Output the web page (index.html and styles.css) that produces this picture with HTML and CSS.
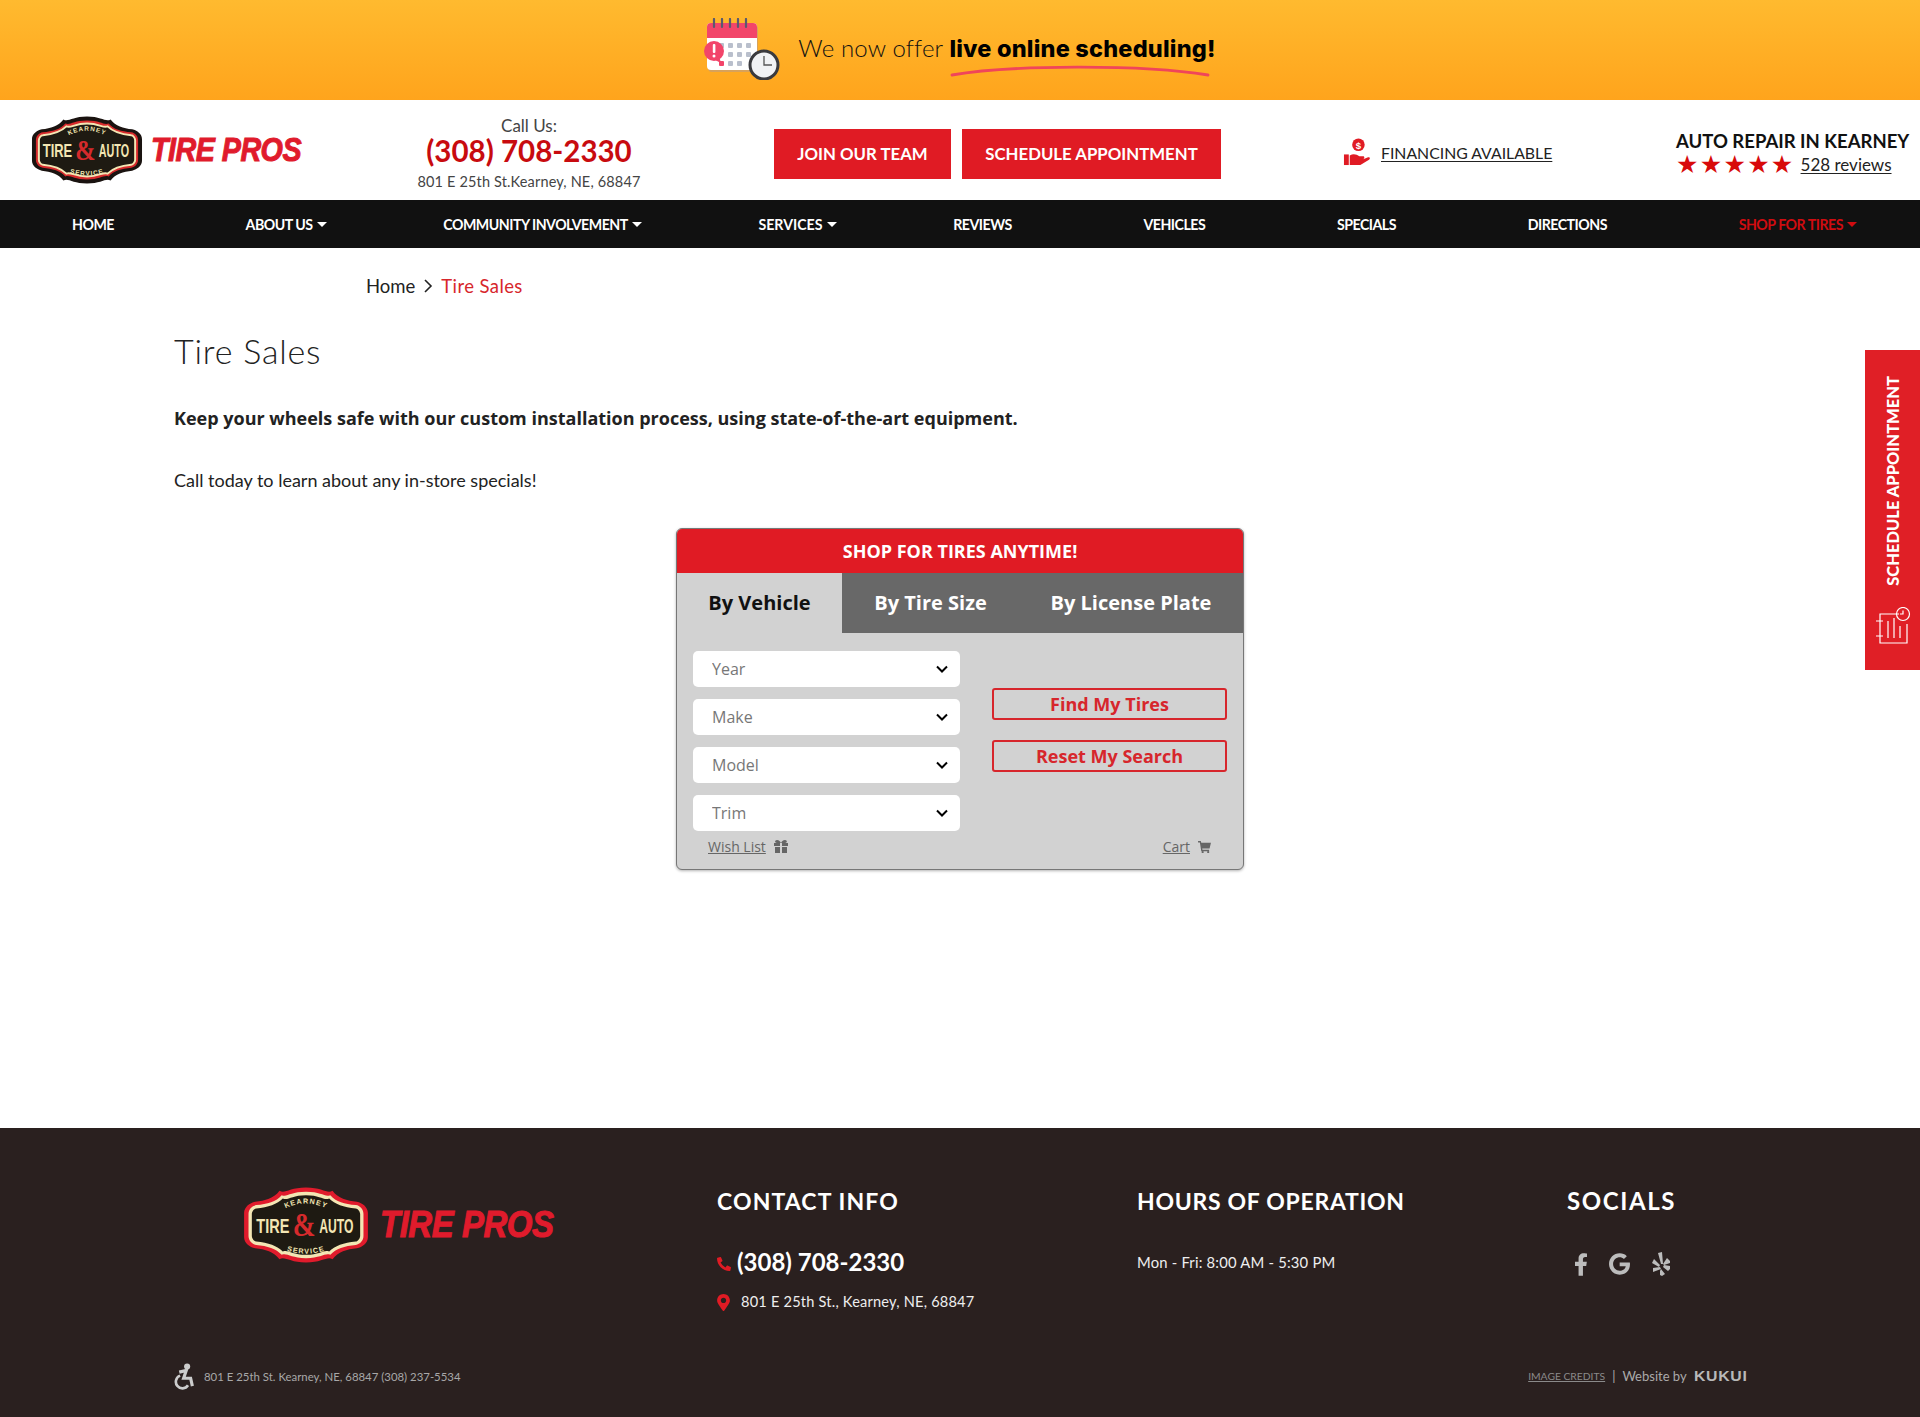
FILE: index.html
```html
<!DOCTYPE html>
<html lang="en">
<head>
<meta charset="utf-8">
<title>Tire Sales</title>
<link rel="stylesheet" href="styles.css">
</head>
<body>
<div class="banner">
  <svg class="cal" viewBox="0 0 76 62" width="76" height="62">
    <rect x="4" y="7" width="50" height="47" rx="4" fill="#d8a25a"/>
    <rect x="3" y="5" width="50" height="47" rx="4" fill="#fff"/>
    <path d="M3 20V9a4 4 0 0 1 4-4h42a4 4 0 0 1 4 4v11z" fill="#f2456a"/>
    <g stroke="#5a5a6e" stroke-width="2.2" stroke-linecap="round"><path d="M10 1v8M18 1v8M26 1v8M34 1v8M42 1v8"/></g>
    <g fill="#b9bfcc"><rect x="15" y="25" width="5" height="5" rx="1"/><rect x="24" y="25" width="5" height="5" rx="1"/><rect x="33" y="25" width="5" height="5" rx="1"/><rect x="42" y="25" width="5" height="5" rx="1"/><rect x="24" y="34" width="5" height="5" rx="1"/><rect x="33" y="34" width="5" height="5" rx="1"/><rect x="42" y="34" width="5" height="5" rx="1"/><rect x="24" y="43" width="5" height="5" rx="1"/><rect x="33" y="43" width="5" height="5" rx="1"/></g>
    <rect x="15" y="43" width="5" height="5" rx="1" fill="#f2456a"/>
    <circle cx="10" cy="33" r="10" fill="#f2456a"/><path d="M11 42l6 3-2-7z" fill="#f2456a"/>
    <rect x="8.8" y="26" width="2.6" height="9" rx="1" fill="#fff"/><circle cx="10" cy="38" r="1.5" fill="#fff"/>
    <circle cx="60" cy="47" r="14" fill="#f1f2f4" stroke="#3a3a3e" stroke-width="3"/>
    <path d="M60 38v9h8" stroke="#555" stroke-width="1.3" fill="none"/>
  </svg>
  <div class="banner-copy">We now offer <strong>live online scheduling!</strong>
    <svg class="swoosh" viewBox="0 0 260 14" width="260" height="14"><path d="M2 11C60 1 190 0 258 11" stroke="#f0455a" stroke-width="2.8" fill="none" stroke-linecap="round"/></svg>
  </div>
</div>

<header class="site-head">
  <a class="logo logo-light" href="#">
    <svg viewBox="0 0 114 68" width="112" height="68">
      <defs><path id="arcA" d="M33 22Q57 7 81 22"/><path id="arcB" d="M36 56Q57 64 78 56"/></defs>
      <path class="b1" d="M33 3C38 6 42 0 57 0s19 6 24 3c5 7 13 9 22 10 5 1 10 5 10 10v22c0 5-5 9-10 10-9 1-17 3-22 10-5-3-9 3-24 3s-19-6-24-3c-5-7-13-9-22-10-5-1-10-5-10-10V23c0-5 5-9 10-10 9-1 17-3 22-10z"/>
      <path class="b2" d="M35 7c5 2 8-3 22-3s17 5 22 3c5 6 13 8 23 9 4 .5 7 4 7 8v20c0 4-3 7.500-7 8-10 1-18 3-23 9-5-2-8 3-22 3s-17-5-22-3c-5-6-13-8-23-9-4-.5-7-4-7-8V24c0-4 3-7.500 7-8 10-1 18-3 23-9z"/>
      <path class="b3" d="M36 10c5 2 8-3 21-3s16 5 21 3c5 5 13 8 24 9 2 0 4 3 4 5v20c0 2-2 5-4 5-11 1-19 4-24 9-5-2-8 3-21 3s-16-5-21-3c-5-5-13-8-24-9-2 0-4-3-4-5V24c0-2 2-5 4-5 11-1 19-4 24-9z"/>
      <text class="l-small"><textPath href="#arcA" startOffset="50%" text-anchor="middle">KEARNEY</textPath></text>
      <text class="l-main" transform="translate(12 41) scale(.73 1)">TIRE</text>
      <text class="l-main" transform="translate(69 41) scale(.61 1)">AUTO</text>
      <text class="l-amp" transform="translate(45 44) scale(.95 1.150)">&amp;</text>
      <text class="l-small"><textPath href="#arcB" startOffset="50%" text-anchor="middle">SERVICE</textPath></text>
    </svg>
    <span class="pros pros-head">TIRE PROS</span>
  </a>
  <div class="call">
    <div class="call-label">Call Us:</div>
    <a class="call-num" href="#">(308) 708-2330</a>
    <div class="call-addr">801 E 25th St.Kearney, NE, 68847</div>
  </div>
  <div class="cta-group">
    <a class="cta cta-join" href="#">JOIN OUR TEAM</a>
    <a class="cta cta-sched" href="#">SCHEDULE APPOINTMENT</a>
  </div>
  <a class="fin" href="#">
    <svg viewBox="0 0 28 30" width="27" height="29"><circle cx="16" cy="7" r="6.500" fill="#e01b24"/><text class="dollar" x="16" y="11" text-anchor="middle">$</text><rect x="1" y="17" width="5" height="11" fill="#e01b24"/><path d="M7 18c4-2 7-1 10 1h4c1.500 0 1.500 2.500 0 3l5-2c2-.5 2.500 1.500 1 2.500L18 28H7z" fill="#e01b24"/></svg>
    <span>FINANCING AVAILABLE</span>
  </a>
  <div class="rating">
    <div class="rating-title">AUTO REPAIR IN KEARNEY</div>
    <div class="rating-row"><span class="stars">★★★★★</span><a href="#">528 reviews</a></div>
  </div>
</header>

<nav class="main-nav">
  <a href="#">HOME</a>
  <a class="drop" href="#">ABOUT US</a>
  <a class="drop" href="#">COMMUNITY INVOLVEMENT</a>
  <a class="drop svc" href="#">SERVICES</a>
  <a href="#">REVIEWS</a>
  <a href="#">VEHICLES</a>
  <a href="#">SPECIALS</a>
  <a href="#">DIRECTIONS</a>
  <a class="drop shop" href="#">SHOP FOR TIRES</a>
</nav>

<a class="side-tab" href="#">
  <span>SCHEDULE APPOINTMENT</span>
  <svg viewBox="0 0 36 38" width="36" height="38" fill="none" stroke="#fff" stroke-width="1.200"><path d="M24 7H5v29h27V17"/><path d="M1 14h7M1 29h7M13 14v17M19 11v20M25 19v12"/><circle cx="28" cy="7" r="6.500"/><path d="M28 3.500V7h-3"/></svg>
</a>

<main class="content">
  <div class="crumbs"><a href="#">Home</a>
    <svg viewBox="0 0 10 16" width="10" height="16"><path d="M2 2l6 6-6 6" fill="none" stroke="#222" stroke-width="1.600"/></svg>
    <a class="here" href="#">Tire Sales</a></div>
  <h1>Tire Sales</h1>
  <p class="lead">Keep your wheels safe with our custom installation process, using state-of-the-art equipment.</p>
  <p class="note">Call today to learn about any in-store specials!</p>

  <section class="widget">
    <div class="widget-head">SHOP FOR TIRES ANYTIME!</div>
    <div class="tabs">
      <div class="tab active">By Vehicle</div>
      <div class="tab size">By Tire Size</div>
      <div class="tab plate">By License Plate</div>
    </div>
    <div class="widget-body">
      <div class="selects">
        <select><option>Year</option></select>
        <select><option>Make</option></select>
        <select><option>Model</option></select>
        <select><option>Trim</option></select>
      </div>
      <div class="actions">
        <a class="act" href="#">Find My Tires</a>
        <a class="act" href="#">Reset My Search</a>
      </div>
    </div>
    <div class="widget-links">
      <a href="#"><u>Wish List</u>
        <svg viewBox="0 0 14 13" width="14" height="13"><path fill="#666" d="M0 3h6v3H0zM8 3h6v3H8zM1 7h5v6H1zM8 7h5v6H8zM3 0c2 0 3.500 1.500 4 3 .5-1.500 2-3 4-3 2.500 0 2.500 3 0 3H3C.5 3 .5 0 3 0z"/></svg></a>
      <a href="#"><u>Cart</u>
        <svg viewBox="0 0 14 13" width="13" height="12"><path fill="#666" d="M0 0h3l.5 2H14l-1.500 6H4.500l.3 1.500H12V11H3.500L2 1.500H0z"/><circle cx="5" cy="12" r="1.200" fill="#666"/><circle cx="11" cy="12" r="1.200" fill="#666"/></svg></a>
    </div>
  </section>
</main>

<footer class="foot">
  <div class="foot-top">
    <a class="logo logo-dark" href="#">
      <svg viewBox="0 0 114 68" width="126" height="76">
        <defs><path id="arcC" d="M33 22Q57 7 81 22"/><path id="arcD" d="M36 56Q57 64 78 56"/></defs>
        <path class="b1" d="M33 3C38 6 42 0 57 0s19 6 24 3c5 7 13 9 22 10 5 1 10 5 10 10v22c0 5-5 9-10 10-9 1-17 3-22 10-5-3-9 3-24 3s-19-6-24-3c-5-7-13-9-22-10-5-1-10-5-10-10V23c0-5 5-9 10-10 9-1 17-3 22-10z"/>
        <path class="b2" d="M35 7c5 2 8-3 22-3s17 5 22 3c5 6 13 8 23 9 4 .5 7 4 7 8v20c0 4-3 7.500-7 8-10 1-18 3-23 9-5-2-8 3-22 3s-17-5-22-3c-5-6-13-8-23-9-4-.5-7-4-7-8V24c0-4 3-7.500 7-8 10-1 18-3 23-9z"/>
        <path class="b3" d="M36 10c5 2 8-3 21-3s16 5 21 3c5 5 13 8 24 9 2 0 4 3 4 5v20c0 2-2 5-4 5-11 1-19 4-24 9-5-2-8 3-21 3s-16-5-21-3c-5-5-13-8-24-9-2 0-4-3-4-5V24c0-2 2-5 4-5 11-1 19-4 24-9z"/>
        <text class="l-small"><textPath href="#arcC" startOffset="50%" text-anchor="middle">KEARNEY</textPath></text>
        <text class="l-main" transform="translate(12 41) scale(.73 1)">TIRE</text>
        <text class="l-main" transform="translate(69 41) scale(.61 1)">AUTO</text>
        <text class="l-amp" transform="translate(45 44) scale(.95 1.150)">&amp;</text>
        <text class="l-small"><textPath href="#arcD" startOffset="50%" text-anchor="middle">SERVICE</textPath></text>
      </svg>
      <span class="pros pros-foot">TIRE PROS</span>
    </a>
    <div class="f-col f-contact">
      <h3>CONTACT INFO</h3>
      <a class="f-phone" href="#"><svg viewBox="0 0 512 512" width="14" height="14"><path fill="#e01b24" d="M497.39 361.8l-112-48a24 24 0 0 0-28 6.900l-49.600 60.600A370.660 370.660 0 0 1 130.600 204.110l60.600-49.600a23.940 23.940 0 0 0 6.900-28l-48-112A24.160 24.160 0 0 0 122.600.610l-104 24A24 24 0 0 0 0 48c0 256.500 207.900 464 464 464a24 24 0 0 0 23.400-18.600l24-104a24.290 24.290 0 0 0-14.010-27.600z"/></svg>(308) 708-2330</a>
      <div class="f-addr"><svg viewBox="0 0 384 512" width="13" height="17"><path fill="#e01b24" d="M172.268 501.670C26.970 291.031 0 255.406 0 192 0 85.961 85.961 0 192 0s192 85.961 192 192c0 63.406-26.970 99.031-172.268 309.670-9.535 13.774-29.930 13.773-39.464 0zM192 272c44.183 0 80-35.817 80-80s-35.817-80-80-80-80 35.817-80 80 35.817 80 80 80z"/></svg>801 E 25th St., Kearney, NE, 68847</div>
    </div>
    <div class="f-col f-hours">
      <h3>HOURS OF OPERATION</h3>
      <div class="f-time">Mon - Fri: 8:00 AM - 5:30 PM</div>
    </div>
    <div class="f-col f-social">
      <h3>SOCIALS</h3>
      <div class="icons">
        <svg viewBox="0 0 320 512" width="14" height="23"><path d="M279.140 288l14.220-92.660h-88.910v-60.130c0-25.350 12.420-50.060 52.240-50.060h40.420V6.260S260.430 0 225.360 0c-73.220 0-121.080 44.380-121.080 124.720v70.620H22.890V288h81.390v224h100.170V288z"/></svg>
        <svg viewBox="0 0 488 512" width="21" height="22"><path d="M488 261.800C488 403.300 391.100 504 248 504 110.800 504 0 393.200 0 256S110.800 8 248 8c66.800 0 123 24.500 166.300 64.900l-67.500 64.900C258.500 52.600 94.300 116.600 94.300 256c0 86.500 69.100 156.600 153.700 156.600 98.200 0 135-70.400 140.800-106.900H248v-85.300h236.100c2.300 12.700 3.900 24.900 3.900 41.400z"/></svg>
        <svg viewBox="0 0 20 24" width="20" height="24"><path d="M7 1l4-1 1 12-2 0zM1 11l2-4 6 6-1 2zM2 20l0-4 7-1 1 2zM9 19l1-2 4 5-3 2-2-1zM12 15l1-2 6 1 0 3-2 2z"/><path d="M12 12l4-6 3 3 0 2-6 2z"/></svg>
      </div>
    </div>
  </div>
  <div class="foot-bottom">
    <div class="access">
      <svg viewBox="0 0 24 30" width="21" height="27"><circle cx="15" cy="3.500" r="3.500" fill="#ccc"/><path fill="none" stroke="#ccc" stroke-width="3.600" d="M6 10l8-2-3 9h8l2 9"/><path fill="none" stroke="#ccc" stroke-width="3" d="M7 14a7.500 7.500 0 1 0 9 11"/></svg>
      <span>801 E 25th St. Kearney, NE, 68847 (308) 237-5534</span>
    </div>
    <div class="credits"><a href="#">IMAGE CREDITS</a><span class="bar">|</span><span>Website by</span><b>KUKUI</b></div>
  </div>
</footer>
</body>
</html>
```

FILE: styles.css
```css
* { box-sizing: border-box; }
html, body { margin: 0; padding: 0; }
body { width: 1920px; height: 1417px; position: relative; overflow: hidden; background: #fff; color: #222; font-family: "Lato", "Liberation Sans", sans-serif; }
a { color: inherit; text-decoration: none; }

.banner { height: 100px; display: flex; align-items: center; justify-content: center; gap: 18px; background: linear-gradient(#ffba2f, #ffa41c); }
.cal { margin-top: -2px; flex-shrink: 0; }
.banner-copy { position: relative; top: -2px; font-size: 24px; color: #111; font-weight: 300; white-space: nowrap; letter-spacing: .15px; }
.banner-copy strong { font-family: "Inter", sans-serif; font-weight: 800; font-size: 23.500px; letter-spacing: .2px; color: #000; }
.swoosh { position: absolute; left: 152px; top: 31px; }

.site-head { height: 100px; display: grid; grid-template-columns: 369px 260px 562px 333px 1fr; padding-left: 30px; align-items: center; }
.logo { display: flex; align-items: center; }
.logo svg { flex-shrink: 0; }
.logo-light { gap: 8px; margin-left: 1px; }
.logo-dark { gap: 11px; }
.b1 { fill: #1a1310; }
.b2 { fill: #d62a2c; }
.b3 { fill: #1e1a12; stroke: #f3e6b4; stroke-width: 2; }
.logo-dark .b1 { fill: #e01b2c; }
.logo-dark .b2 { fill: #f3e6b4; }
.logo-dark .b3 { stroke: none; }
.l-small { font: 700 6.500px "Liberation Sans", sans-serif; letter-spacing: 1px; fill: #f3e6b4; }
.l-main { font: 700 18px "Liberation Sans", sans-serif; fill: #f3e6b4; }
.l-amp { font: 700 26px "Liberation Serif", serif; fill: #d62a2c; }
.pros { font-family: "Liberation Sans", sans-serif; font-style: italic; font-weight: 700; color: #e01b2c; white-space: nowrap; transform-origin: left center; -webkit-text-stroke: 1px #e01b2c; }
.pros-head { font-size: 33px; letter-spacing: -.6px; transform: scaleX(.87); }
.pros-foot { font-size: 37px; letter-spacing: -.5px; transform: scaleX(.89); }

.call { text-align: center; padding-top: 14px; }
.call-label { font-size: 17px; line-height: 14px; color: #444; }
.call-num { display: block; font-size: 29.500px; line-height: 36px; font-weight: 700; color: #c80b0f; }
.call-addr { font-size: 14.500px; line-height: 26px; color: #444; letter-spacing: .15px; }

.cta-group { display: flex; gap: 11px; padding-left: 115px; margin-top: 8px; }
.cta { height: 50px; display: flex; align-items: center; justify-content: center; background: #e01b24; color: #fff; font-weight: 700; font-size: 16.800px; white-space: nowrap; padding-bottom: 1px; }
.cta-join { width: 177px; }
.cta-sched { width: 259px; }

.fin { display: flex; align-items: center; gap: 11px; padding-left: 122px; margin-top: 4px; font-size: 15.800px; color: #222; white-space: nowrap; }
.fin svg { flex-shrink: 0; }
.fin span { text-decoration: underline; text-underline-offset: 2px; }
.dollar { font: 700 10px "Liberation Sans", sans-serif; fill: #fff; }

.rating { padding-left: 122px; margin-top: 6px; white-space: nowrap; }
.rating-title { font-size: 18.500px; line-height: 24px; font-weight: 700; color: #111; }
.rating-row { display: flex; align-items: center; gap: 6px; line-height: 24px; font-size: 17px; }
.rating-row a { text-decoration: underline; text-underline-offset: 2px; }
.stars { color: #d80a0a; font-family: "DejaVu Sans", sans-serif; font-size: 25px; letter-spacing: 1.300px; line-height: 24px; }

.main-nav { height: 48px; background: #111; display: flex; justify-content: space-between; align-items: center; color: #fff; font-size: 14.200px; font-weight: 700; padding: 0 63px 0 72px; }
.main-nav a { white-space: nowrap; letter-spacing: -.5px; }
.main-nav .drop { margin-right: -15px; }
.main-nav .svc { letter-spacing: 0; }
.main-nav .shop { color: #d00c10; margin-right: 0; }
.drop::after { content: ""; display: inline-block; margin-left: 4px; vertical-align: 3px; border: 5px solid transparent; border-top-color: currentColor; border-bottom-width: 0; }

.side-tab { position: absolute; right: 0; top: 350px; width: 55px; height: 320px; background: #e01f26; color: #fff; display: flex; flex-direction: column; align-items: center; padding-top: 26px; gap: 21px; }
.side-tab span { writing-mode: vertical-rl; transform: rotate(180deg); font-weight: 900; font-size: 16.500px; line-height: 22px; white-space: nowrap; }

.content { height: 880px; padding: 24px 174px 0; }
.crumbs { display: flex; align-items: center; gap: 8px; padding-left: 192px; font-size: 18.500px; line-height: 28px; color: #222; }
.crumbs .here { color: #d7262c; letter-spacing: .4px; }
h1 { margin: 29px 0 0; font-size: 34px; line-height: 44px; font-weight: 300; letter-spacing: .8px; color: #222; }
.lead { margin: 32px 0 0; font-family: "Open Sans", sans-serif; font-weight: 700; font-size: 18px; line-height: 26px; color: #222; }
.note { margin: 36px 0 0; font-size: 18px; line-height: 26px; color: #222; }

.widget { width: 568px; height: 342px; margin: 35px auto 0; background: #d2d2d2; border: 1px solid #777; border-radius: 6px; overflow: hidden; font-family: "Open Sans", sans-serif; box-shadow: 0 1px 3px rgba(0,0,0,.3); }
.widget-head { height: 44px; background: #e01b24; color: #fff; font-weight: 700; font-size: 18px; display: flex; align-items: center; justify-content: center; margin: 0 -1px; }
.tabs { height: 60px; display: flex; background: #686868; color: #fff; font-weight: 700; font-size: 20px; }
.tab { display: flex; align-items: center; justify-content: center; padding-bottom: 1px; }
.tab.active { width: 165px; background: #d2d2d2; color: #111; }
.tab.size { width: 177px; }
.tab.plate { width: 224px; }
.widget-body { display: flex; padding: 18px 16px 0; }
.selects { width: 267px; display: flex; flex-direction: column; gap: 12px; }
.selects select { height: 36px; width: 100%; border: 0; border-radius: 5px; appearance: none; background: #fff url("data:image/svg+xml,%3Csvg xmlns='http://www.w3.org/2000/svg' viewBox='0 0 12 8'%3E%3Cpath d='M1 1.500l5 5 5-5' fill='none' stroke='%23000' stroke-width='2'/%3E%3C/svg%3E") no-repeat right 12px center / 12px 8px; padding-left: 19px; font: 16px "Open Sans", sans-serif; color: #777; }
.actions { width: 235px; margin-left: 32px; padding-top: 37px; display: flex; flex-direction: column; gap: 20px; }
.act { height: 32px; border: 2px solid #d7262c; border-radius: 3px; display: flex; align-items: center; justify-content: center; color: #d7262c; font-weight: 700; font-size: 18px; }
.widget-links { display: flex; justify-content: space-between; padding: 6px 32px 0 31px; font-size: 14px; color: #666; }
.widget-links a { display: flex; align-items: center; gap: 8px; }

.foot { height: 289px; background: #2a201f; color: #fff; padding: 0 174px; position: relative; }
.foot-top { display: grid; grid-template-columns: 543px 420px 430px 1fr; height: 222px; padding-top: 59px; }
.logo-dark { align-self: start; padding-left: 69px; }
.f-col h3 { margin: 0; font-size: 23px; line-height: 28px; font-weight: 700; letter-spacing: 1.100px; white-space: nowrap; }
.f-hours h3 { letter-spacing: .7px; }
.f-social h3 { font-size: 24px; letter-spacing: 1.600px; }
.f-phone { display: flex; align-items: center; gap: 6px; margin-top: 30px; font-size: 24px; line-height: 34px; font-weight: 700; }
.f-phone svg { margin-top: 3px; }
.f-addr { display: flex; align-items: center; gap: 11px; margin-top: 12px; font-size: 14.600px; line-height: 22px; color: #eee; letter-spacing: .2px; }
.f-time { margin-top: 32px; font-size: 14.800px; line-height: 30px; color: #eee; letter-spacing: .2px; }
.icons { display: flex; align-items: center; gap: 21px; margin-top: 37px; padding-left: 7px; fill: #bcbcbc; }
.foot-bottom { display: flex; justify-content: space-between; align-items: center; height: 40px; margin-top: 6px; }
.access { display: flex; align-items: center; gap: 9px; font-size: 11.400px; color: #a8a8a8; }
.credits { display: flex; align-items: center; gap: 7px; font-size: 13px; color: #aaa; }
.credits a { text-decoration: underline; font-size: 10.300px; color: #8a8a8a; }
.credits b { font: 700 14px "Liberation Sans", sans-serif; letter-spacing: .6px; transform: scaleX(1.13); transform-origin: left; margin-right: 5px; color: #b8b8b8; }
```
